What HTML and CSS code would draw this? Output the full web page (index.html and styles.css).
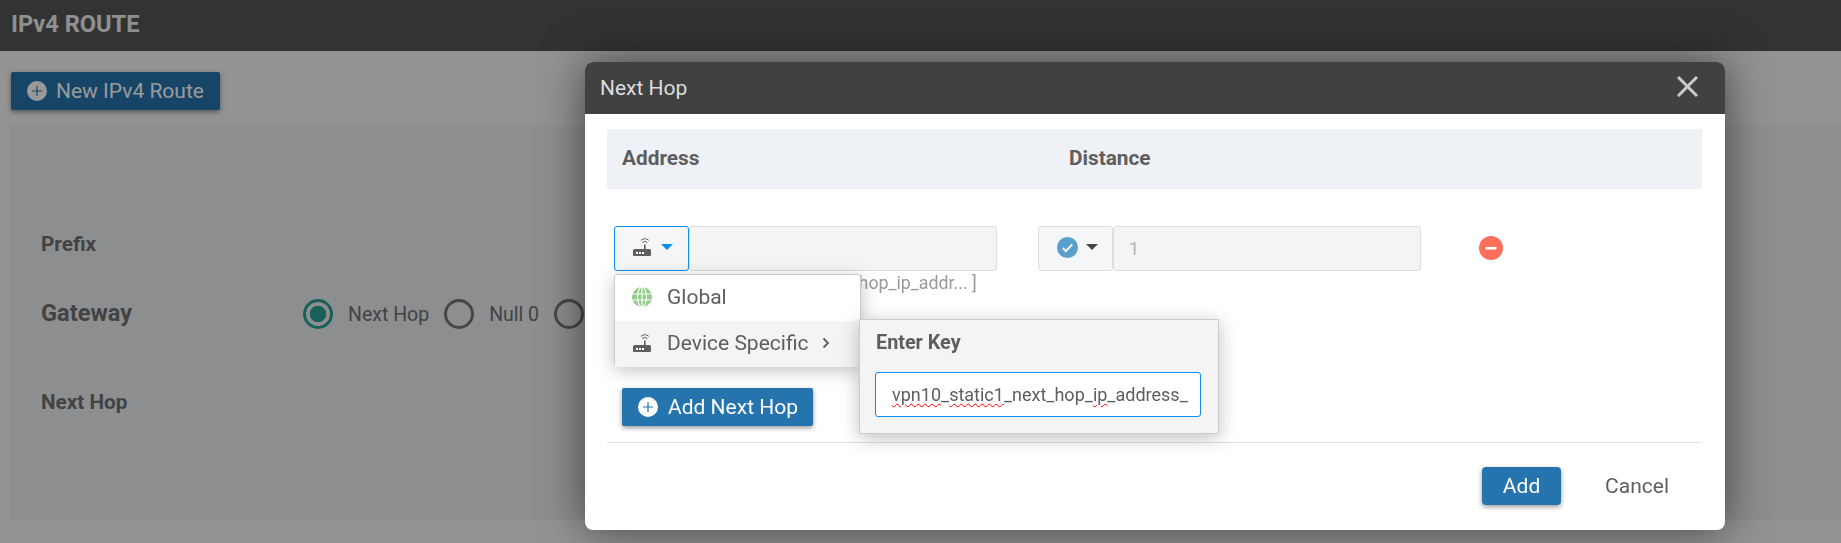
FILE: index.html
```html
<!DOCTYPE html>
<html lang="en">
<head>
    <meta charset="UTF-8">
    <meta name="viewport" content="width=device-width, initial-scale=1.0">
    <title>IPv4 Route</title>
    <link rel="stylesheet" href="styles.css">
</head>
<body>
    <svg class="defs" width="0" height="0">
        <symbol id="router" viewBox="0 0 18 18">
            <path d="M0 12.5a1.5 1.5 0 0 1 1.5-1.5H11V6.500h1.600V11h3.900a1.500 1.500 0 0 1 1.500 1.500V17a1 1 0 0 1-1 1H1a1 1 0 0 1-1-1z" fill="currentColor"/>
            <path d="M3 14h2v2H3zM6 14h2v2H6zM9 14h2v2H9z" fill="#fff"/>
            <path d="M9.200 4.500a4 4 0 0 1 5.200 0M7.800 2.300a6.500 6.500 0 0 1 8 0" fill="none" stroke="currentColor" stroke-width="1"/>
        </symbol>
        <symbol id="plus" viewBox="0 0 20 20">
            <path fill-rule="evenodd" d="M10 0a10 10 0 1 1 0 20a10 10 0 0 1 0-20zM9.400 5v4.400H5v1.200h4.400V15h1.200v-4.400H15V9.400h-4.400V5z" fill="currentColor"/>
        </symbol>
    </svg>

    <header class="topbar">IPv4 ROUTE</header>

    <main class="page">
        <button class="btn btn-new"><svg class="plus-icon"><use href="#plus"/></svg>New IPv4 Route</button>
        <section class="route-form">
            <div class="field-label prefix-label">Prefix</div>
            <div class="gateway-row">
                <div class="gateway-label">Gateway</div>
                <div class="radios">
                    <span class="radio on"></span><span class="radio-text">Next Hop</span>
                    <span class="radio"></span><span class="radio-text">Null 0</span>
                    <span class="radio"></span>
                </div>
            </div>
            <div class="field-label">Next Hop</div>
        </section>
    </main>

    <div class="backdrop"></div>

    <div class="modal">
        <div class="modal-head">
            <span>Next Hop</span>
            <svg class="close" viewBox="0 0 21 21"><path d="M1 1l19 19M20 1L1 20" stroke="currentColor" stroke-width="3" fill="none"/></svg>
        </div>
        <div class="modal-body">
            <div class="table-head">
                <div class="col-address">Address</div>
                <div class="col-distance">Distance</div>
            </div>
            <div class="hop-row">
                <div class="col-address-cell">
                    <div class="input-group">
                        <div class="scope-btn focus">
                            <svg class="router-icon"><use href="#router"/></svg>
                            <i class="caret blue"></i>
                        </div>
                        <div class="fake-input"></div>
                    </div>
                    <div class="hint">[ vpn10_static1_next_hop_ip_addr... ]</div>
                </div>
                <div class="input-group distance">
                    <div class="scope-btn">
                        <svg class="check-icon" viewBox="0 0 20 20"><circle cx="10" cy="10" r="10" fill="#589fcb"/><path d="M5.500 10.500l3 3 6-6.500" stroke="#fff" stroke-width="1.800" fill="none"/></svg>
                        <i class="caret"></i>
                    </div>
                    <div class="fake-input">1</div>
                </div>
                <svg class="remove-icon" viewBox="0 0 22 22"><circle cx="11" cy="11" r="11" fill="#fd6f5a"/><rect x="6" y="10" width="10" height="2.400" fill="#fff"/></svg>
            </div>
            <button class="btn btn-add-hop"><svg class="plus-icon"><use href="#plus"/></svg>Add Next Hop</button>
            <div class="modal-foot">
                <button class="btn btn-add">Add</button>
                <span class="cancel">Cancel</span>
            </div>

            <div class="scope-menu">
                <div class="menu-item">
                    <svg class="globe" viewBox="0 0 20 20"><circle cx="10" cy="10" r="10" fill="#8fcb84"/><g fill="none" stroke="#fff" stroke-width="1.200"><ellipse cx="10" cy="10" rx="4.500" ry="10"/><path d="M10 0v20M0.500 7h19M0.500 13h19"/></g></svg>
                    Global
                </div>
                <div class="menu-item active">
                    <svg class="router-icon"><use href="#router"/></svg>
                    Device Specific
                    <svg class="chevron" viewBox="0 0 8 12"><path d="M1.500 1.500L6 6l-4.500 4.500" stroke="currentColor" stroke-width="1.800" fill="none"/></svg>
                </div>
            </div>
            <div class="key-panel">
                <div class="key-title">Enter Key</div>
                <div class="key-input"><span class="typo">vpn10</span>_<span class="typo">static1</span>_next_hop_<span class="typo">ip</span>_address_</div>
            </div>
        </div>
    </div>
</body>
</html>
```

FILE: styles.css
```css
* { box-sizing: border-box; }
html, body { margin: 0; height: 100%; overflow: hidden; }
body { background: #f5f5f5; font-family: Roboto, "Liberation Sans", sans-serif; color: #707070; }
.defs { position: absolute; }

.btn { display: flex; align-items: center; border: 0; border-radius: 2px; background: #2574ad; color: #fff; font-family: inherit; font-size: 21px; box-shadow: 0 2px 5px rgba(0,0,0,.4); padding: 0; }
.plus-icon { width: 20px; height: 20px; margin-right: 9px; color: #fff; }

.topbar { height: 51px; background: #535755; color: #eee; font-size: 23.600px; font-weight: 700; line-height: 49px; padding-left: 11px; }
.page { padding: 21px 0 0 11px; }
.btn-new { width: 209px; height: 38px; padding-left: 16px; }
.route-form { height: 395px; margin-top: 15px; background: #ebedf0; padding: 107px 30px 0; color: #707070; }
.field-label { font-size: 20.700px; font-weight: 700; line-height: 24px; }
.prefix-label { margin-bottom: 38px; }
.gateway-row { display: flex; align-items: center; height: 40px; margin-bottom: 56px; }
.gateway-label { width: 262px; font-size: 23.600px; font-weight: 700; padding-bottom: 3px; }
.radios { display: flex; align-items: center; font-size: 19.500px; }
.radio { width: 30px; height: 30px; border: 3px solid #777; border-radius: 50%; }
.radio.on { border-color: #2ca196; background: radial-gradient(circle, #2ca196 0 8px, transparent 8.500px); }
.radio-text { margin: 0 15px 0 15px; }

.backdrop { position: fixed; inset: 0; background: rgba(0,0,0,.4); }

.modal { position: absolute; left: 585px; top: 62px; width: 1140px; height: 468px; background: #fff; border-radius: 8px; box-shadow: 0 0 45px rgba(0,0,0,.55); color: #5e5e5e; }
.modal-head { display: flex; justify-content: space-between; align-items: center; height: 52px; padding: 0 27px 0 15px; background: #404143; border-radius: 8px 8px 0 0; color: #ddd; font-size: 21px; }
.close { width: 21px; height: 21px; margin-top: -3px; color: #ccc; }
.modal-body { position: relative; padding: 15px 23px 0 22px; }

.table-head { display: flex; height: 60px; align-items: center; background: #eef1f6; font-size: 20.800px; font-weight: 700; padding: 0 0 3px 15px; }
.col-address { width: 447px; }

.hop-row { display: flex; align-items: flex-start; margin: 37px 0 0 7px; }
.col-address-cell { width: 424px; }
.input-group { display: flex; height: 45px; }
.input-group .fake-input { width: 308px; }
.scope-btn { display: flex; align-items: center; justify-content: center; gap: 10px; width: 75px; background: #f5f6f8; border: 1px solid #dedede; border-radius: 3px; padding: 0 0 3px 3px; }
.scope-btn.focus { border-color: #0d8fe8; }
.distance .scope-btn { gap: 8px; }
.fake-input { background: #f4f4f4; border: 1px solid #dedede; border-radius: 3px; color: #b5b5b5; font-size: 18px; line-height: 43px; padding-left: 15px; }
.hint { margin: 2px 0 0 75px; color: #9a9a9a; font-size: 17.800px; line-height: 20px; white-space: nowrap; }
.router-icon { width: 18px; height: 18px; color: #5f5f5f; }
.check-icon { width: 21px; height: 21px; }
.caret { width: 0; height: 0; border: 6px solid transparent; border-top: 6px solid #444; border-bottom: 0; }
.caret.blue { border-top-color: #0d8fe8; }
.remove-icon { width: 24px; height: 24px; margin: 10px 0 0 58px; }
.btn-add-hop { width: 191px; height: 38px; margin: 95px 0 0 15px; padding-left: 16px; }
.btn-add-hop .plus-icon { margin-right: 10px; }
.modal-foot { display: flex; justify-content: flex-end; align-items: center; height: 86px; margin-top: 16px; border-top: 1px solid #e0e0e0; padding: 0 33px 0 0; font-size: 21px; }
.btn-add { width: 79px; height: 38px; justify-content: center; border-radius: 4px; margin-right: 44px; }

.scope-menu { position: absolute; left: 29px; top: 160px; width: 247px; height: 92px; background: #fff; border: 1px solid #ccc; border-radius: 3px; box-shadow: 0 4px 18px rgba(0,0,0,.25); font-size: 21px; }
.menu-item { display: flex; align-items: center; height: 46px; padding: 0 0 2px 17px; }
.menu-item .router-icon { margin: 0 16px 0 1px; }
.menu-item.active { background: #f4f4f4; }
.globe { width: 20px; height: 20px; margin-right: 15px; }
.chevron { width: 8px; height: 12px; margin-left: 13px; }
.key-panel { position: absolute; left: 274px; top: 205px; width: 360px; height: 115px; background: #f4f4f4; border: 1px solid #ccc; box-shadow: 0 4px 18px rgba(0,0,0,.25); padding: 11px 17px 0 15px; }
.key-title { font-size: 19.800px; font-weight: 700; line-height: 24px; padding-left: 1px; }
.key-input { height: 45px; margin-top: 17px; background: #fff; border: 1px solid #0d8fe8; border-radius: 3px; font-size: 18px; line-height: 43px; padding-left: 16px; white-space: nowrap; overflow: hidden; }
.typo { text-decoration: underline wavy #f00 1px; text-underline-offset: 2px; }
```
